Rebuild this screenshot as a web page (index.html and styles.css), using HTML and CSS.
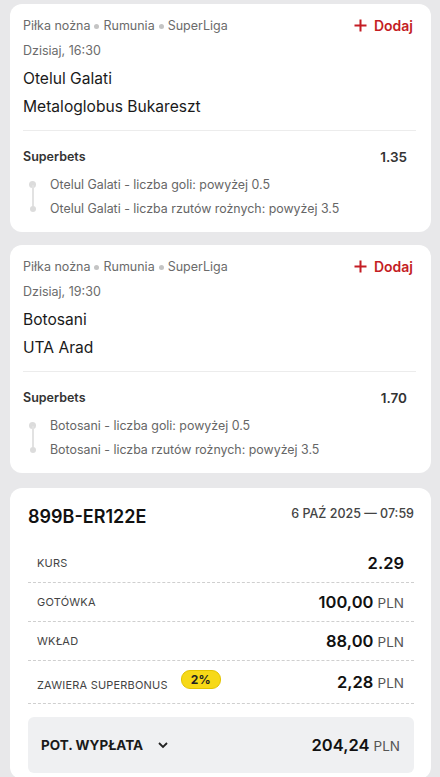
FILE: index.html
```html
<!DOCTYPE html>
<html lang="pl">
  <head>
    <meta charset="UTF-8" />
    <meta name="viewport" content="width=device-width, initial-scale=1.0" />
    <title>Kupon</title>
    <link rel="stylesheet" href="styles.css">
  </head>
  <body>
    <div class="list">
      <div class="card event">
        <div class="event-top">
          <div class="crumbs">
            <span>Piłka nożna</span><i class="dot"></i><span>Rumunia</span><i class="dot"></i><span>SuperLiga</span>
          </div>
          <button type="button" class="add">
            <svg width="13" height="13" viewBox="0 0 13 13"><path d="M6.5 0.5v12M0.5 6.5h12" stroke="currentColor" stroke-width="2" fill="none" /></svg>
            Dodaj
          </button>
        </div>
        <div class="time">Dzisiaj, 16:30</div>
        <div class="teams">
          <div>Otelul Galati</div>
          <div>Metaloglobus Bukareszt</div>
        </div>
        <div class="market">
          <span>Superbets</span>
          <span class="odds">1.35</span>
        </div>
        <ul class="legs">
          <li>Otelul Galati - liczba goli: powyżej 0.5</li>
          <li>Otelul Galati - liczba rzutów rożnych: powyżej 3.5</li>
        </ul>
      </div>

      <div class="card event">
        <div class="event-top">
          <div class="crumbs">
            <span>Piłka nożna</span><i class="dot"></i><span>Rumunia</span><i class="dot"></i><span>SuperLiga</span>
          </div>
          <button type="button" class="add">
            <svg width="13" height="13" viewBox="0 0 13 13"><path d="M6.5 0.5v12M0.5 6.5h12" stroke="currentColor" stroke-width="2" fill="none" /></svg>
            Dodaj
          </button>
        </div>
        <div class="time">Dzisiaj, 19:30</div>
        <div class="teams">
          <div>Botosani</div>
          <div>UTA Arad</div>
        </div>
        <div class="market">
          <span>Superbets</span>
          <span class="odds">1.70</span>
        </div>
        <ul class="legs">
          <li>Botosani - liczba goli: powyżej 0.5</li>
          <li>Botosani - liczba rzutów rożnych: powyżej 3.5</li>
        </ul>
      </div>

      <div class="card ticket">
        <div class="ticket-head">
          <span class="ticket-id">899B-ER122E</span>
          <span class="ticket-date">6 PAŹ 2025 — 07:59</span>
        </div>
        <div class="row">
          <span class="label">KURS</span>
          <span class="value">2.29</span>
        </div>
        <div class="row">
          <span class="label">GOTÓWKA</span>
          <span class="value">100,00 <small>PLN</small></span>
        </div>
        <div class="row">
          <span class="label">WKŁAD</span>
          <span class="value">88,00 <small>PLN</small></span>
        </div>
        <div class="row bonus">
          <span class="label">ZAWIERA SUPERBONUS <b class="badge">2%</b></span>
          <span class="value">2,28 <small>PLN</small></span>
        </div>
        <div class="payout">
          <span class="payout-label">POT. WYPŁATA
            <svg width="12" height="8" viewBox="0 0 12 8"><path d="M2 2l4 4 4-4" stroke="#222" stroke-width="1.8" fill="none" /></svg>
          </span>
          <span class="value">204,24 <small>PLN</small></span>
        </div>
      </div>
    </div>
  </body>
</html>
```

FILE: styles.css
```css
body {
  margin: 0;
  background-color: #e8e8ea;
  font-family: Inter, "Noto Sans", sans-serif;
  color: #1a1a1a;
}
.list {
  display: flex;
  flex-direction: column;
  gap: 13px;
  padding: 4px 9px 0 10px;
}
.card {
  background-color: #ffffff;
  border-radius: 12px;
}
.event {
  padding: 12px 15px 11px 13px;
}
.event-top {
  display: flex;
  justify-content: space-between;
  align-items: center;
  height: 18px;
}
.crumbs {
  display: flex;
  align-items: center;
  font-size: 12.5px;
  color: #6b6b6b;
}
.dot {
  width: 5px;
  height: 5px;
  border-radius: 50%;
  background-color: #c4c4c4;
  margin: 2px 4px 0;
}
.add {
  display: flex;
  align-items: center;
  gap: 7px;
  border: none;
  background: none;
  padding: 0;
  margin-right: 3px;
  font-family: inherit;
  font-size: 14px;
  font-weight: 600;
  color: #c41d24;
}
.time {
  margin-top: 8px;
  font-size: 12.5px;
  line-height: 18px;
  color: #6b6b6b;
}
.teams {
  margin-top: 5px;
  padding-bottom: 9px;
  border-bottom: 1px solid #ececec;
  font-size: 15.6px;
  line-height: 28px;
}
.market {
  display: flex;
  justify-content: space-between;
  align-items: center;
  margin-top: 16px;
  font-size: 12.5px;
  line-height: 20px;
  font-weight: 600;
  color: #333333;
}
.odds {
  font-size: 13.5px;
  margin-right: 9px;
}
.legs {
  list-style: none;
  margin: 6px 0 0;
  padding: 0;
  font-size: 12.4px;
  line-height: 24px;
  color: #666666;
}
.legs li {
  position: relative;
  padding-left: 27px;
}
.legs li::before {
  content: "";
  position: absolute;
  left: 6px;
  top: 8px;
  width: 7px;
  height: 7px;
  border-radius: 50%;
  background-color: #dcdcdc;
}
.legs li + li::before {
  left: 7px;
  top: 9px;
  width: 6px;
  height: 6px;
}
.legs li:first-child::after {
  content: "";
  position: absolute;
  left: 9px;
  top: 12px;
  width: 2px;
  height: 24px;
  background-color: #e2e2e2;
}
.ticket {
  margin-top: 2px;
  padding: 17px 17px 6px 18px;
}
.ticket-head {
  display: flex;
  justify-content: space-between;
  align-items: center;
  line-height: 24px;
  margin-bottom: 15px;
}
.ticket-id {
  font-size: 18px;
  font-weight: 600;
  color: #111111;
}
.ticket-date {
  font-size: 12.5px;
  font-weight: 500;
  color: #444444;
  margin-top: -6px;
}
.row {
  display: flex;
  justify-content: space-between;
  align-items: center;
  height: 38px;
  padding: 0 10px 0 9px;
  border-bottom: 1px dashed #cfcfcf;
}
.row.bonus {
  height: 42px;
}
.label {
  font-size: 11px;
  color: #444444;
  letter-spacing: 0.2px;
}
.bonus .label {
  display: flex;
  align-items: center;
  margin-top: 5px;
}
.badge {
  margin: -10px 0 0 13px;
  padding: 0 9px;
  height: 17px;
  line-height: 17px;
  border-radius: 9px;
  background-color: #f7d917;
  border: 1px solid #e3c400;
  font-size: 12px;
  font-weight: 700;
  color: #222222;
  letter-spacing: 0.3px;
}
.value {
  font-size: 16.5px;
  font-weight: 600;
  color: #111111;
}
.value small {
  font-size: 13.5px;
  font-weight: 400;
  color: #555555;
}
.payout {
  display: flex;
  justify-content: space-between;
  align-items: center;
  height: 56px;
  margin-top: 13px;
  padding: 0 14px 0 13px;
  border-radius: 6px;
  background-color: #eff0f2;
}
.payout-label {
  display: flex;
  align-items: center;
  gap: 14px;
  font-size: 13.5px;
  font-weight: 700;
  color: #1a1a1a;
}
```
